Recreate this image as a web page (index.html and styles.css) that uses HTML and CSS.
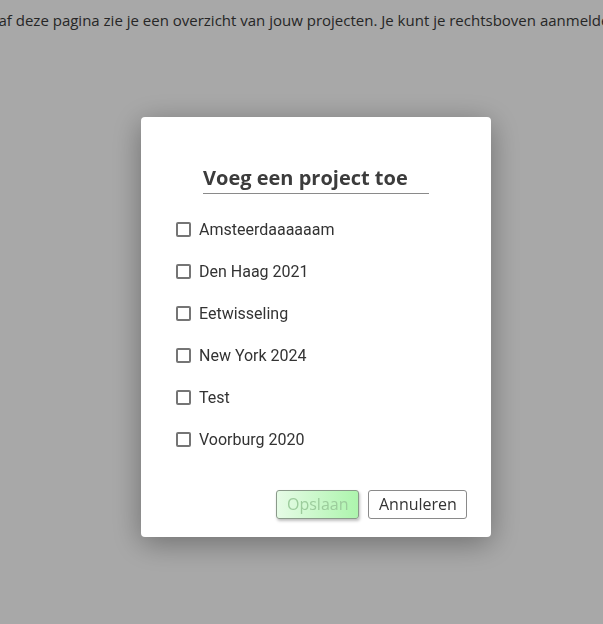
FILE: index.html
```html
<!DOCTYPE html>
<html lang="nl">
<head>
<meta charset="utf-8">
<title>Projecten</title>
<link rel="stylesheet" href="styles.css">
</head>
<body>
<main class="page">
  <p class="intro">Vanaf deze pagina zie je een overzicht van jouw projecten. Je kunt je rechtsboven aanmelden of afmelden.</p>
</main>
<div class="overlay">
  <div class="modal">
    <h2 class="modal-title">Voeg een project toe</h2>
    <ul class="project-list">
      <li><label class="project"><input type="checkbox" class="check"><span>Amsteerdaaaaaam</span></label></li>
      <li><label class="project"><input type="checkbox" class="check"><span>Den Haag 2021</span></label></li>
      <li><label class="project"><input type="checkbox" class="check"><span>Eetwisseling</span></label></li>
      <li><label class="project"><input type="checkbox" class="check"><span>New York 2024</span></label></li>
      <li><label class="project"><input type="checkbox" class="check"><span>Test</span></label></li>
      <li><label class="project"><input type="checkbox" class="check"><span>Voorburg 2020</span></label></li>
    </ul>
    <div class="actions">
      <button class="btn btn-save" disabled>Opslaan</button>
      <button class="btn btn-cancel">Annuleren</button>
    </div>
  </div>
</div>
</body>
</html>
```
FILE: styles.css
```css
html, body {
  margin: 0;
  padding: 0;
  background: #ffffff;
  overflow: hidden;
}
body {
  font-family: "Open Sans", "Liberation Sans", sans-serif;
  color: #222;
}
.page {
  padding-top: 9px;
}
.intro {
  margin: 0 0 0 -28px;
  white-space: nowrap;
  font-size: 15px;
  line-height: 22px;
  color: #3a3a3a;
}
.overlay {
  position: fixed;
  inset: 0;
  background: rgba(0, 0, 0, 0.34);
  display: flex;
  align-items: flex-start;
  padding: 117px 0 0 141px;
}
.modal {
  width: 350px;
  height: 420px;
  box-sizing: border-box;
  background: #fff;
  border-radius: 4px;
  box-shadow: 0 6px 30px rgba(0, 0, 0, 0.35);
  padding: 47px 24px 18px 34px;
  display: flex;
  flex-direction: column;
}
.modal-title {
  margin: 0 0 0 28px;
  width: 226px;
  font-family: "Open Sans", sans-serif;
  font-weight: 700;
  font-size: 20px;
  line-height: 28px;
  color: #3c3c3c;
  border-bottom: 1px solid #8a8a8a;
  padding-bottom: 1px;
}
.project-list {
  list-style: none;
  margin: 23px 0 0 0;
  padding: 0;
  display: flex;
  flex-direction: column;
  gap: 18px;
}
.project {
  display: flex;
  align-items: center;
  gap: 8px;
  height: 24px;
  font-family: Roboto, sans-serif;
  font-size: 16px;
  color: #333;
}
.check {
  appearance: none;
  -webkit-appearance: none;
  margin: 0 0 0 1px;
  width: 15px;
  height: 15px;
  border: 2px solid #757575;
  border-radius: 2px;
  box-sizing: border-box;
  background: #fff;
}
.actions {
  margin-top: auto;
  display: flex;
  justify-content: flex-end;
  gap: 9px;
}
.btn {
  font-family: "Open Sans", sans-serif;
  font-size: 16px;
  height: 29px;
  padding: 0 10px;
  border-radius: 3px;
  line-height: 27px;
}
.btn-save {
  width: 83px;
  color: #9ccc9c;
  border: 1px solid #8a9a8a;
  background: linear-gradient(to right, #e6fbe6, #adf5ad);
  box-shadow: 1px 2px 3px rgba(0, 0, 0, 0.25);
}
.btn-cancel {
  width: 99px;
  color: #333;
  border: 1px solid #8a8a8a;
  background: #fff;
}
```
